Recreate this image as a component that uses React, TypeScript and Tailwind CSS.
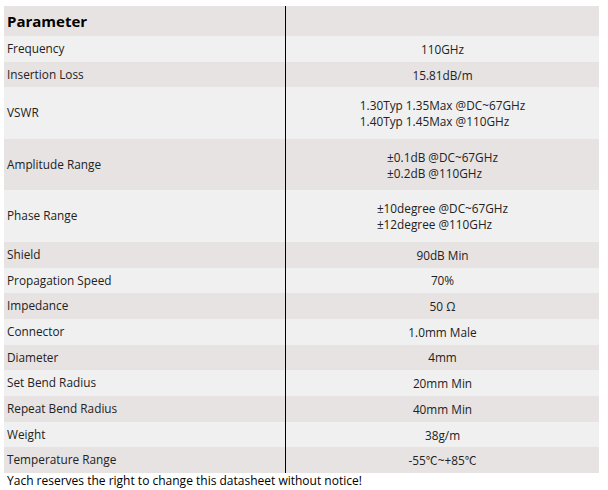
import React from 'react';

type Row = { name: string; value: string[] };

const rows: Row[] = [
  { name: 'Frequency', value: ['110GHz'] },
  { name: 'Insertion Loss', value: ['15.81dB/m'] },
  { name: 'VSWR', value: ['1.30Typ 1.35Max @DC~67GHz', '1.40Typ 1.45Max @110GHz'] },
  { name: 'Amplitude Range', value: ['±0.1dB @DC~67GHz', '±0.2dB @110GHz'] },
  { name: 'Phase Range', value: ['±10degree @DC~67GHz', '±12degree @110GHz'] },
  { name: 'Shield', value: ['90dB Min'] },
  { name: 'Propagation Speed', value: ['70%'] },
  { name: 'Impedance', value: ['50 Ω'] },
  { name: 'Connector', value: ['1.0mm Male'] },
  { name: 'Diameter', value: ['4mm'] },
  { name: 'Set Bend Radius', value: ['20mm Min'] },
  { name: 'Repeat Bend Radius', value: ['40mm Min'] },
  { name: 'Weight', value: ['38g/m'] },
  { name: 'Temperature Range', value: ['-55℃~+85℃'] },
];

export default function App() {
  return (
    <div
      className="w-[608px] h-[490px] bg-white pt-[6px] pl-[4px] text-[#222]"
      style={{ fontFamily: '"Open Sans", "Noto Sans CJK SC", sans-serif' }}
    >
      <div className="w-[595px]">
        {/* 表头 */}
        <div className="flex h-[30px] bg-[#e7e3e2]">
          <div className="w-[282px] border-r-[1.5px] border-black pl-[3px] flex items-center text-[15px] font-bold text-black">
            Parameter
          </div>
          <div className="flex-1" />
        </div>

        {rows.map((row, i) => {
          const tall = row.value.length > 1;
          return (
            <div
              key={row.name}
              className={`flex ${tall ? 'h-[51.5px]' : 'h-[25.7px]'} ${i % 2 === 0 ? 'bg-[#f0f0f0]' : 'bg-[#e7e3e2]'}`}
            >
              <div className="w-[282px] border-r-[1.5px] border-black pl-[3px] flex items-center text-[11.8px]">
                {row.name}
              </div>
              <div className="flex-1 flex flex-col items-center justify-center text-[11.8px] leading-[16px]">
                <div className="text-left">
                  {row.value.map((v) => (
                    <div key={v}>{v}</div>
                  ))}
                </div>
              </div>
            </div>
          );
        })}
      </div>
      <div className="pl-[3px] text-[12px] text-black leading-[16px]">
        Yach reserves the right to change this datasheet without notice!
      </div>
    </div>
  );
}
